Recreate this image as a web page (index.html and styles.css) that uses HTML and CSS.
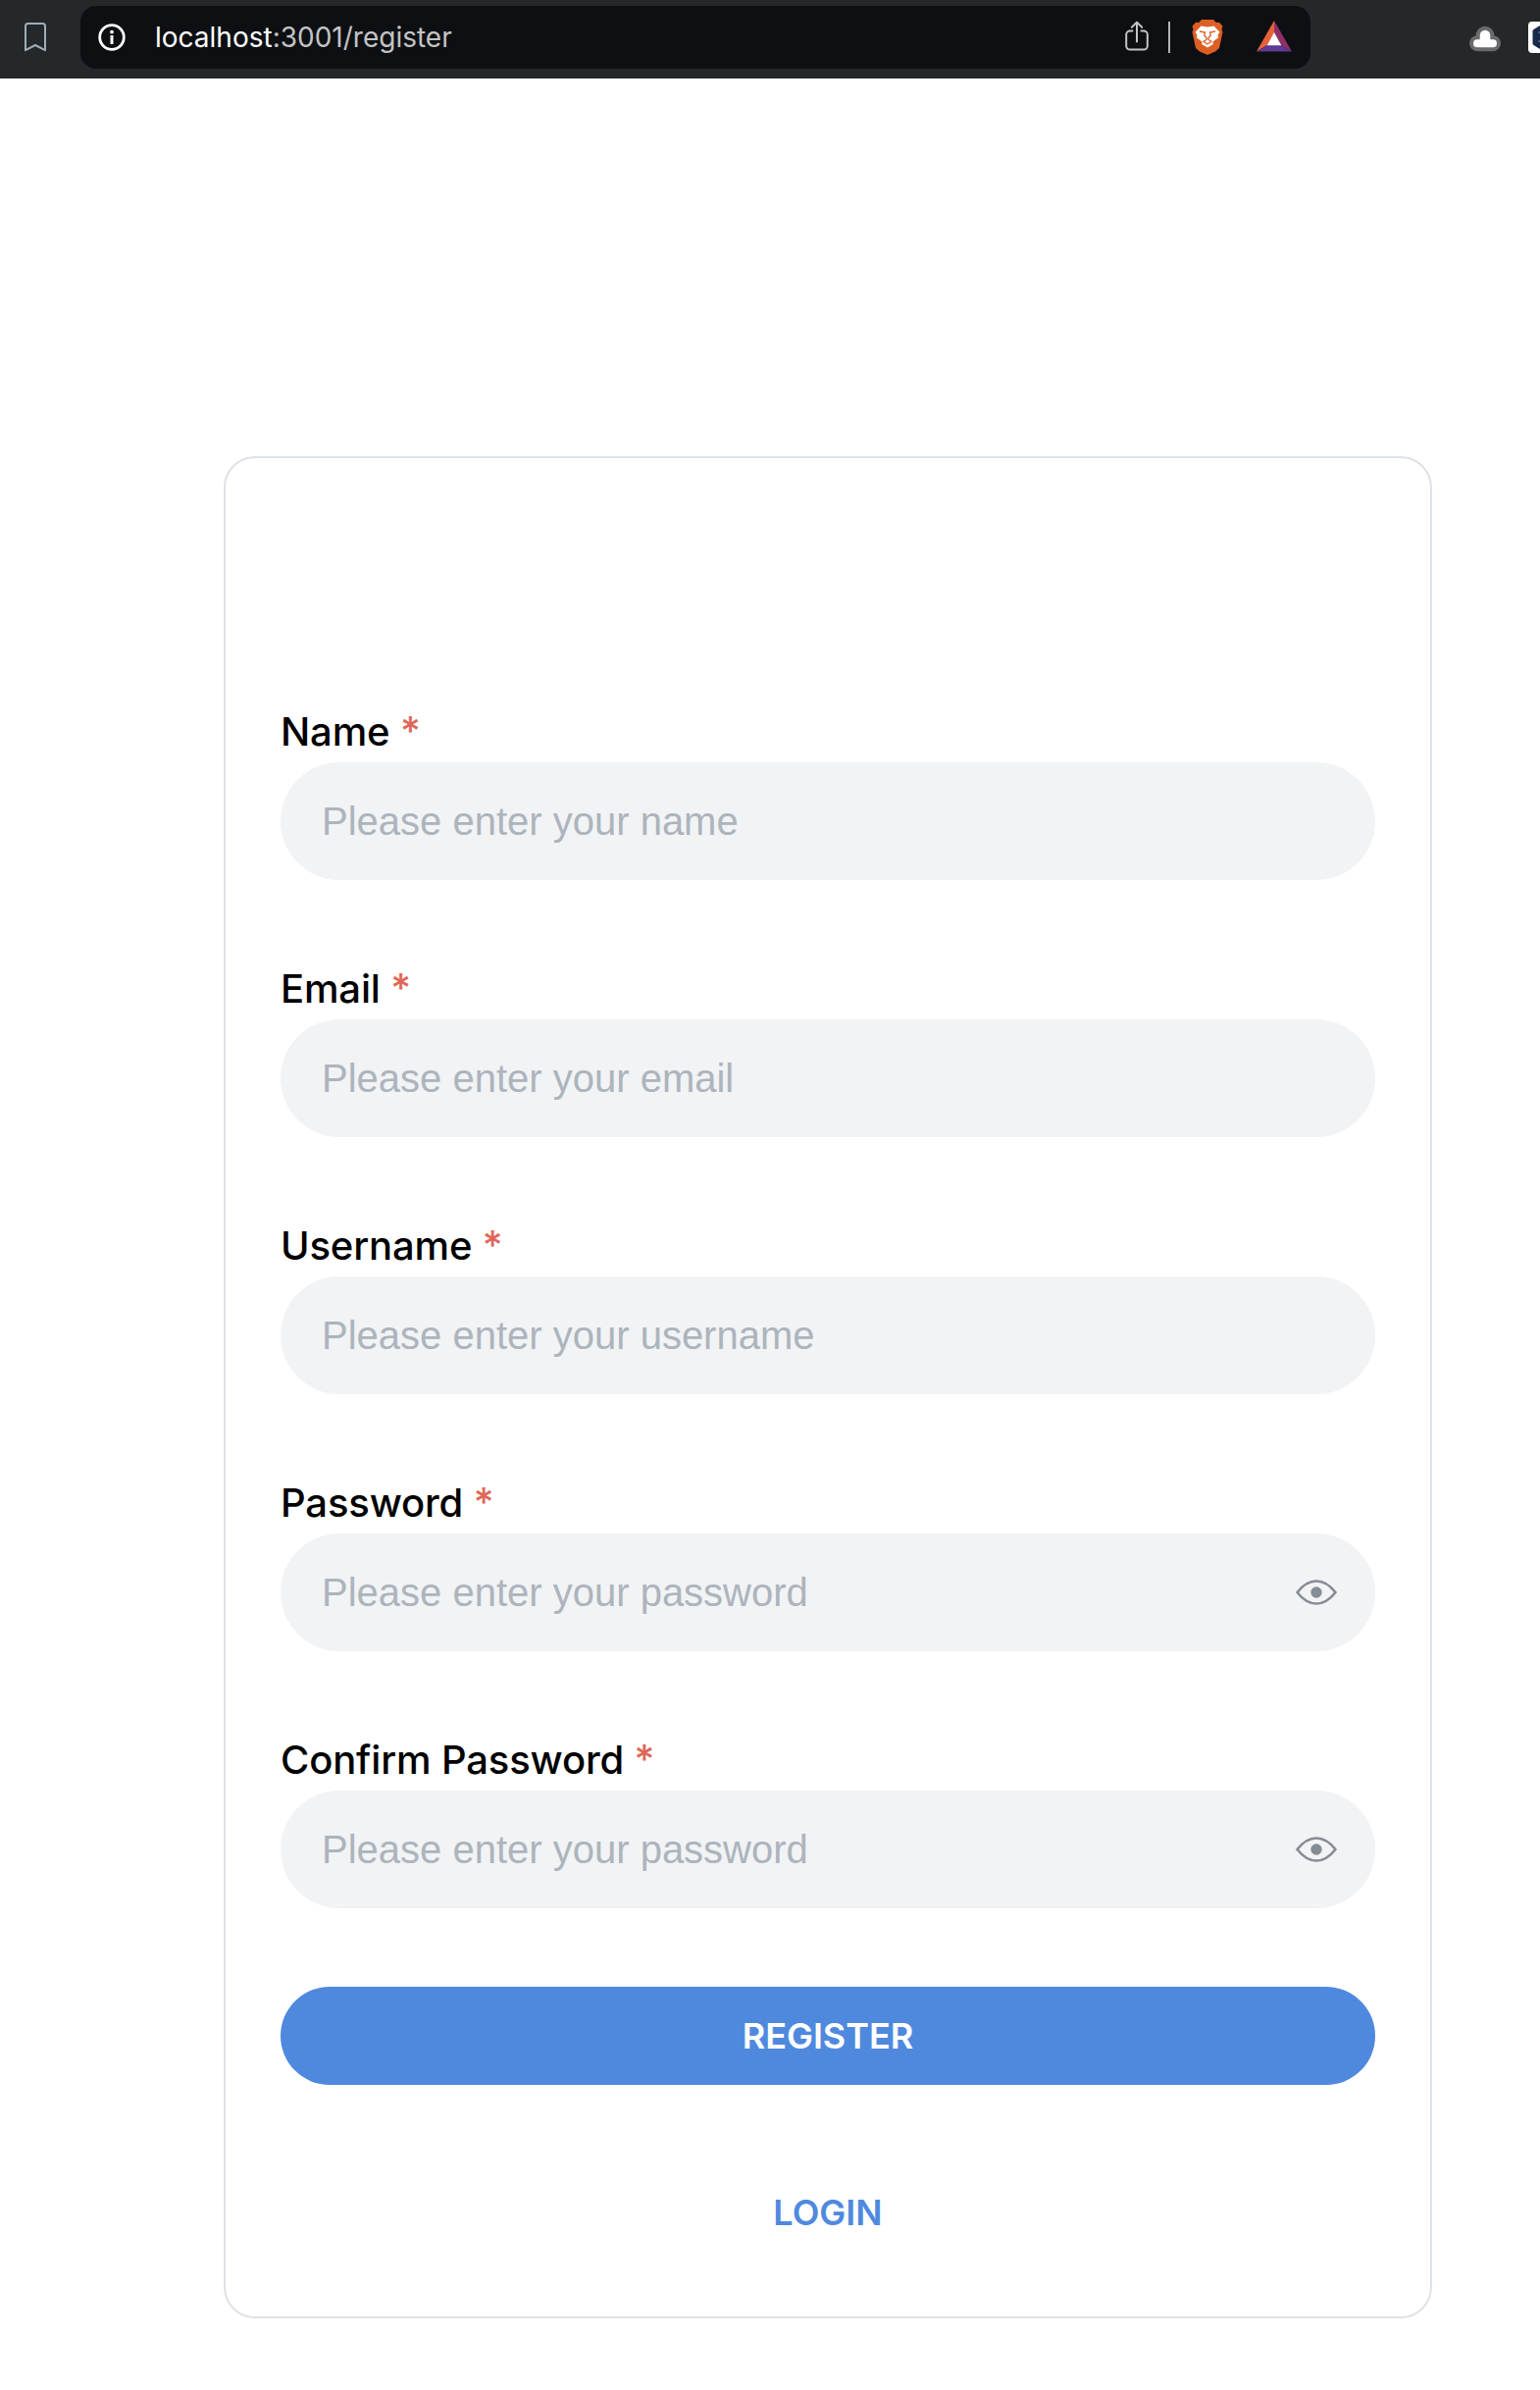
FILE: index.html
```
<!DOCTYPE html>
<html lang="en">
<head>
<meta charset="utf-8">
<title>Register</title>
<link rel="stylesheet" href="styles.css">
</head>
<body>
<header class="toolbar">
  <svg class="bookmark" width="24" height="32" viewBox="0 0 24 32"><path d="M4.500 2h15a2.500 2.500 0 0 1 2.500 2.500v24.700L12 24 2 29.200V4.500A2.500 2.500 0 0 1 4.500 2z" fill="none" stroke="#a0adb9" stroke-width="2" stroke-linejoin="round"/></svg>
  <div class="address">
    <svg class="info" width="28" height="28" viewBox="0 0 28 28"><circle cx="14" cy="14" r="12.300" fill="none" stroke="#fff" stroke-width="2.800"/><circle cx="14" cy="8.600" r="1.900" fill="#fff"/><path d="M14 12v9" stroke="#fff" stroke-width="3"/></svg>
    <div class="url"><span class="host">localhost</span>:3001/register</div>
    <svg class="share" width="24" height="32" viewBox="0 0 24 32"><path d="M7.500 10.500H5a3.800 3.800 0 0 0-3.800 3.800v11.500A3.800 3.800 0 0 0 5 29.600h14a3.800 3.800 0 0 0 3.800-3.800V14.300a3.800 3.800 0 0 0-3.800-3.800h-2.500M12 21.500V2M6.800 6.800 12 1.600l5.200 5.200" fill="none" stroke="#c4c5c7" stroke-width="2" stroke-linecap="round" stroke-linejoin="round"/></svg>
    <span class="divider"></span>
    <svg class="brave" width="32" height="36" viewBox="0 0 32 36"><path d="M10 0h12l3 3 3-.3 3.500 4-1 3 1 3L28 29l-4 3.500L16 36l-8-3.500L4 29 .5 12.700l1-3-1-3L4 2.700 7 3z" fill="#dc5f24"/><path d="M9.500 6.500l6.500 1 6.500-1 6 6.200-2 3 .5 2.800-5.500 4 .3 2.500L16 28.600 10.200 25l.3-2.500L5 18.500l.5-2.800-2-3z" fill="#fff"/><path d="M8 12l5.500 1-.8 3L15 18.500v2l-3 1.800L16 25l4-2.700-3-1.800v-2l2.300-2.500-.8-3L24 12" fill="none" stroke="#dc5f24" stroke-width="1.300"/></svg>
    <svg class="bat" width="36" height="32" viewBox="0 0 36 32"><path d="M18 0v13L11 25 0 31.500z" fill="#e8623a"/><path d="M18 0v13l7 12 11 6.500z" fill="#8e3066"/><path d="M0 31.500 11 25h14l11 6.500z" fill="#5d3a94"/><path d="M18 12 25.300 25.300H10.700z" fill="#fff"/></svg>
  </div>
  <svg class="cloud" width="32" height="27" viewBox="0 0 32 27"><path d="M8 22.200a4 4 0 0 1 0-8h2.400c.5-.6.300-1.400.3-4.200a5.300 5.300 0 0 1 10.600 0c0 2.800-.2 3.600.3 4.200H24a4 4 0 0 1 0 8z" fill="#fff" stroke="#6a6b6c" stroke-width="8" stroke-linejoin="round" paint-order="stroke"/></svg>
  <svg class="extension" width="12" height="32" viewBox="0 0 12 32"><path d="M12 0H4a4 4 0 0 0-4 4v24a4 4 0 0 0 4 4h8z" fill="#fff"/><path d="M12 4 5.500 8q-1 .7-1 2v12q0 1.300 1 2l6.500 4z" fill="#182b4b"/><path d="M10.500 11H12M10.500 20H12" stroke="#71829b" stroke-width="1.500"/></svg>
</header>
<main class="page">
  <form class="card">
    <div class="field">
      <label class="label" for="name">Name <span class="required">*</span></label>
      <div class="control"><input class="input" id="name" type="text" placeholder="Please enter your name"></div>
    </div>
    <div class="field">
      <label class="label" for="email">Email <span class="required">*</span></label>
      <div class="control"><input class="input" id="email" type="email" placeholder="Please enter your email"></div>
    </div>
    <div class="field">
      <label class="label" for="username">Username <span class="required">*</span></label>
      <div class="control"><input class="input" id="username" type="text" placeholder="Please enter your username"></div>
    </div>
    <div class="field">
      <label class="label" for="password">Password <span class="required">*</span></label>
      <div class="control"><input class="input" id="password" type="password" placeholder="Please enter your password">
        <svg class="eye" width="42" height="26" viewBox="0 0 42 26"><path d="M1.500 13Q10.500 1.500 21 1.500T40.500 13Q31.500 24.500 21 24.500T1.500 13z" fill="none" stroke="#868c94" stroke-width="2.600" stroke-linejoin="round"/><circle cx="21" cy="13" r="5.700" fill="#868c94"/></svg>
      </div>
    </div>
    <div class="field">
      <label class="label" for="confirm">Confirm Password <span class="required">*</span></label>
      <div class="control"><input class="input" id="confirm" type="password" placeholder="Please enter your password">
        <svg class="eye" width="42" height="26" viewBox="0 0 42 26"><path d="M1.500 13Q10.500 1.500 21 1.500T40.500 13Q31.500 24.500 21 24.500T1.500 13z" fill="none" stroke="#868c94" stroke-width="2.600" stroke-linejoin="round"/><circle cx="21" cy="13" r="5.700" fill="#868c94"/></svg>
      </div>
    </div>
    <button class="register" type="button">REGISTER</button>
    <a class="login">LOGIN</a>
  </form>
</main>
</body>
</html>
```
FILE: styles.css
```
* { box-sizing: border-box; }
body { margin: 0; background: #fff; font-family: Inter, sans-serif; color: #000; overflow: hidden; }
svg { display: block; flex: none; }
.toolbar { display: flex; height: 80px; padding: 6px 0 0 24px; background: #24282b; }
.bookmark { margin-top: 16px; }
.address { display: flex; width: 1254px; height: 64px; flex: none; margin-left: 34px; padding-left: 18px; border-radius: 16px; background: #0d0f13; }
.info { margin-top: 18px; }
.url { width: 989px; margin-left: 30px; font-size: 28px; line-height: 64px; letter-spacing: 0; white-space: nowrap; color: #c3c3c4; }
.host { color: #fff; }
.share { margin-top: 15px; }
.divider { width: 2px; height: 32px; margin: 16px 0 0 20px; background: #b2b3b4; }
.brave { margin: 14px 0 0 22px; }
.bat { margin: 15px 0 0 34px; }
.cloud { margin: 20px 0 0 162px; }
.extension { margin: 16px 0 0 28px; }
.page { padding: 385px 110px 0 228px; }
.card { display: flex; flex-direction: column; height: 1898px; padding: 252px 56px 0; border: 2px solid #dee2e6; border-radius: 32px; }
.field { height: 262px; }
.label { display: block; height: 58px; font-size: 40px; font-weight: 500; line-height: 54px; letter-spacing: -0.15px; white-space: nowrap; }
.required { display: inline-block; transform: translateY(-1px); color: #df6759; }
.control { display: flex; align-items: center; height: 120px; padding: 0 39px 0 42px; border-radius: 60px; background: #f1f3f5; }
.input { flex: 1; height: 116px; padding: 0; border: 0; outline: 0; background: transparent; font: 40px "Liberation Sans", sans-serif; }
.input::placeholder { color: #adb4bc; opacity: 1; }
.register { height: 100px; margin-top: -4px; padding: 0; border: 0; border-radius: 50px; background: #4f89de; color: #fff; font: 600 36px Inter, sans-serif; }
.login { align-self: center; margin-top: 103px; font-size: 36px; font-weight: 600; line-height: 54px; color: #4f89de; }
```
